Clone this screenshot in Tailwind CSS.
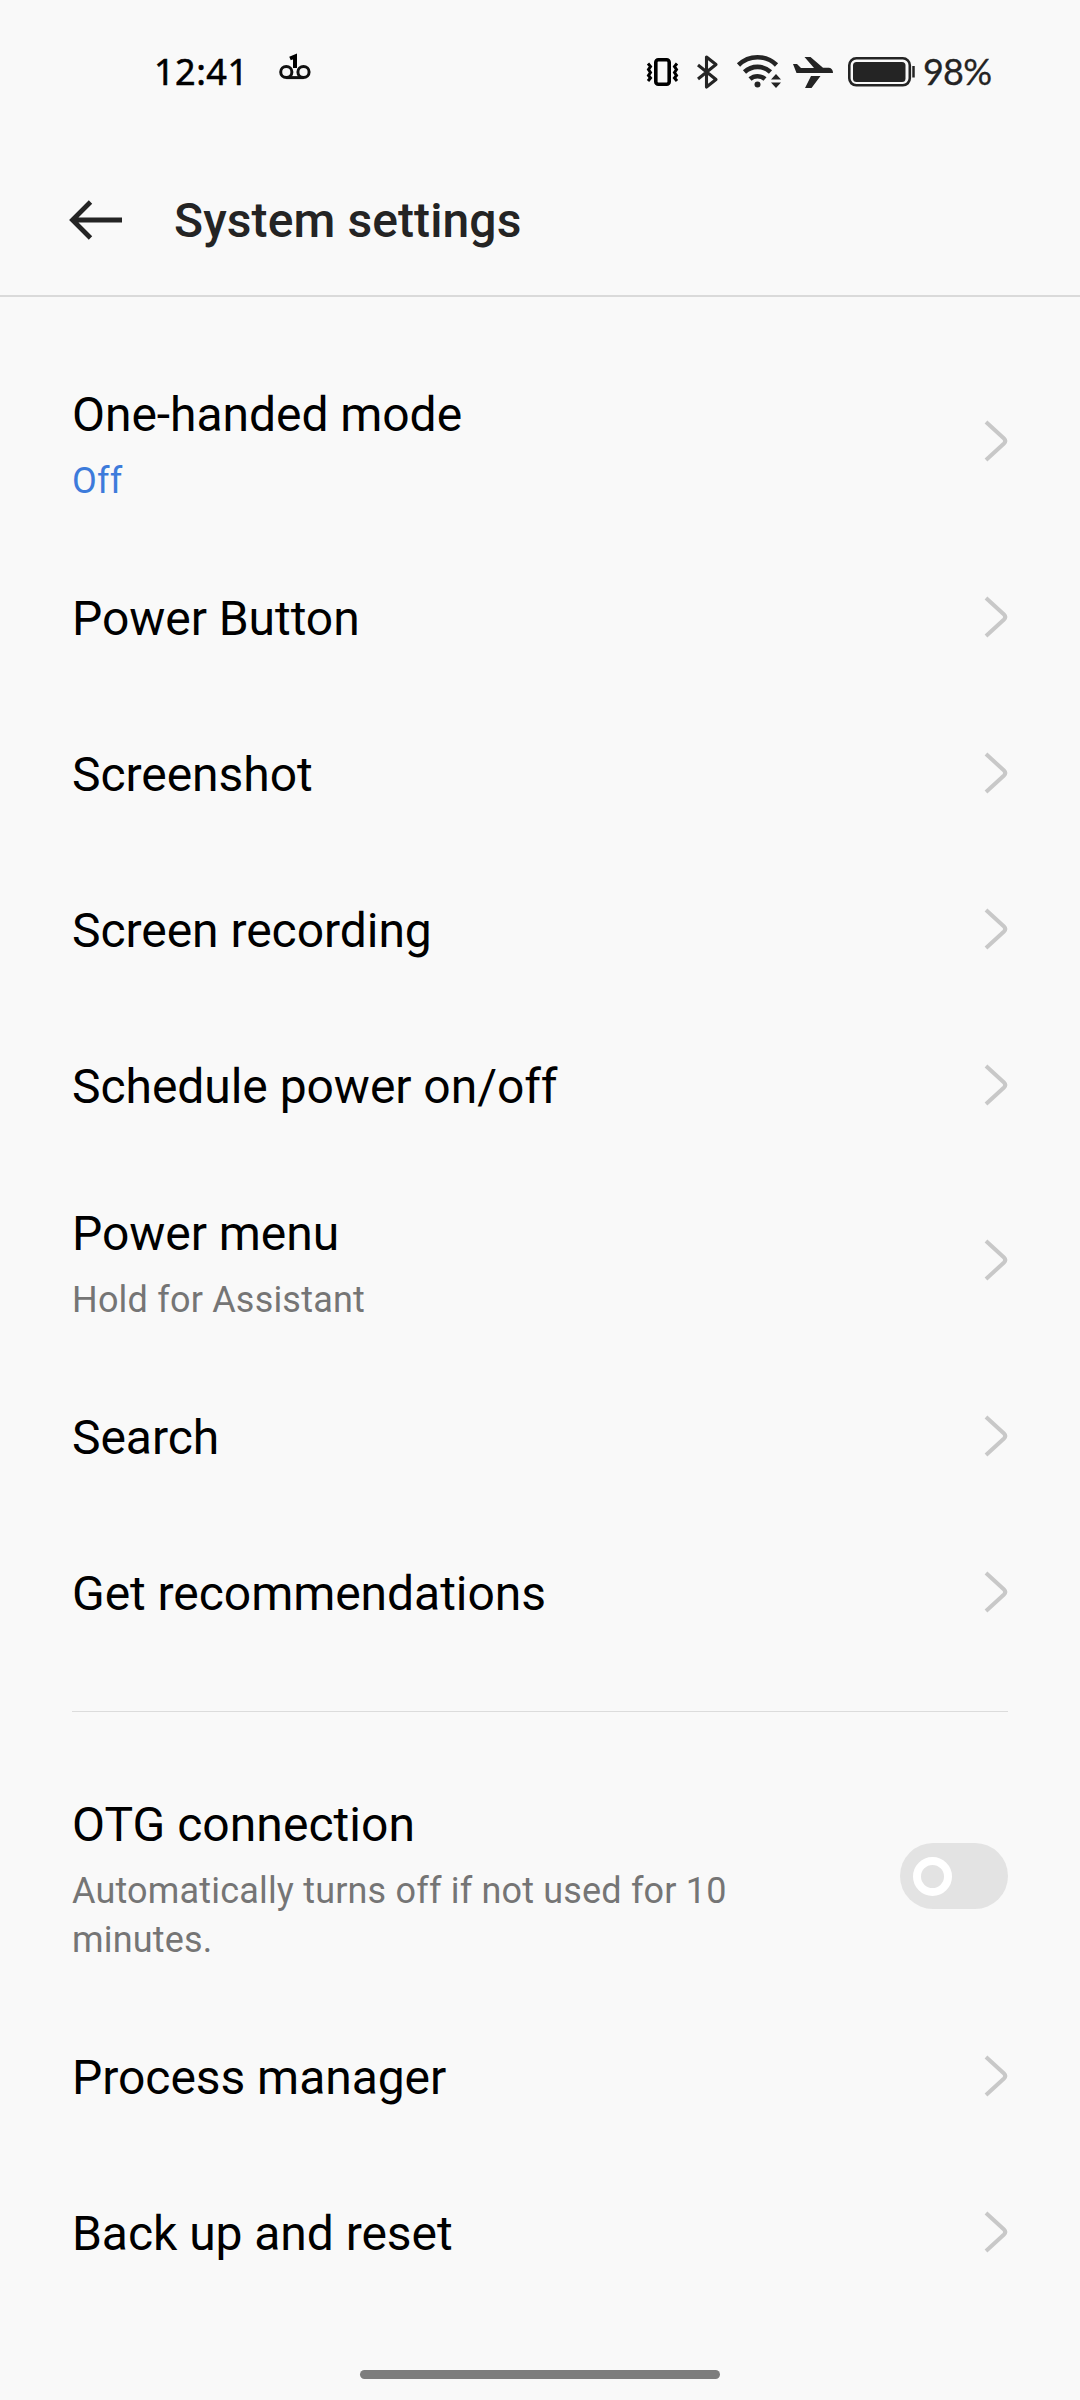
<!DOCTYPE html>
<html lang="en">
<head>
  <meta charset="UTF-8">
  <meta name="viewport" content="width=device-width, initial-scale=1.0">
  <title>System settings</title>
  <script src="https://cdn.jsdelivr.net/npm/@tailwindcss/browser@4"></script>
</head>
<body class="bg-[#f9f9f9] font-['Roboto',sans-serif] text-black">
  <div class="w-[1080px] h-[2400px] flex flex-col overflow-hidden">

    <!-- Status bar -->
    <div class="h-[144px] flex items-center justify-between pl-[154px] pr-[88px] text-[36px] leading-none">
      <div class="flex items-center">
        <span class="w-[125px] font-['Noto_Sans',sans-serif] tracking-[0.5px] [-webkit-text-stroke:0.6px_black]">12:41</span>
        <!-- Voicemail -->
        <svg class="w-8 h-11" viewBox="279 50 32 44" fill="none" stroke="#111" stroke-width="3">
          <circle cx="286.3" cy="72" r="5.6" />
          <circle cx="303.5" cy="72" r="5.6" />
          <path d="M286.3 77.6H303.5" />
          <path d="M290 58.5L295 56.5V68" stroke="#000" stroke-width="4" />
        </svg>
      </div>

      <div class="flex items-center text-[#242424]">
        <!-- Vibrate -->
        <svg class="w-[50px] h-11" viewBox="645 50 50 44" fill="none" stroke="#000">
          <rect x="655.8" y="59.8" width="13.400" height="24.400" rx="2.5" stroke-width="3.6" />
          <path d="M648 63.500L650.500 66.500L648.500 69.500L650.500 72.500L648.500 75.500L650.500 78L648 81M677 63.500L674.500 66.500L676.500 69.500L674.500 72.500L676.500 75.500L674.500 78L677 81" stroke-width="3" />
        </svg>
        <!-- Bluetooth -->
        <svg class="w-10 h-11" viewBox="695 50 40 44" fill="none" stroke="currentColor" stroke-width="3.1" stroke-linejoin="round">
          <path d="M698 65L716 79.500L706.500 87V57L716 64.500L698 79" />
        </svg>
        <!-- Wifi -->
        <svg class="w-[56px] h-11" viewBox="735 50 56 44" fill="none" stroke="currentColor" stroke-width="4.600">
          <path d="M738.500 65A27 27 0 0 1 776.500 65" />
          <path d="M744.500 72A19 19 0 0 1 770.500 72" />
          <path d="M750 79A11.500 11.500 0 0 1 765 79" />
          <circle cx="757.500" cy="84.500" r="3" fill="currentColor" stroke="none" />
          <path d="M771 79.500L776 74L781 79.500ZM771 82.500L776 88L781 82.500Z" fill="currentColor" stroke="none" />
        </svg>
        <!-- Airplane -->
        <svg class="w-[55px] h-11" viewBox="791 50 55 44" fill="currentColor">
          <path d="M793 64H797L801 68H814L804.500 57H810.500L823 67.800H829Q833 68.500 833 73H796.500ZM811 76H820.500L811.500 88H805Z" />
        </svg>
        <!-- Battery -->
        <svg class="w-[77px] h-11" viewBox="846 50 77 44" fill="none" stroke="currentColor">
          <rect x="849.300" y="58.300" width="60.500" height="27" rx="7" stroke-width="2.600" />
          <rect x="853" y="62" width="52.500" height="20" rx="3.500" fill="currentColor" stroke="none" />
          <path d="M913.500 66V77.500" stroke-width="2.500" />
        </svg>
        <span class="w-[69px] pb-0.5 font-['Lato',sans-serif] tracking-[-0.8px] [-webkit-text-stroke:0.3px_#242424]">98%</span>
      </div>
    </div>

    <!-- Header -->
    <header class="h-[153px] flex items-center border-b-2 border-[#dadada] pl-[68px]">
      <svg class="w-14 h-12" viewBox="68 196 56 48" fill="none" stroke="#242424" stroke-width="4.800">
        <path d="M122 220H73M90.500 202L72.500 220L90.500 238" />
      </svg>
      <h1 class="ml-[50px] pt-0.5 text-[48px] leading-[56px] font-medium tracking-[0.1px] text-[#242424]">System settings</h1>
    </header>

    <main class="pt-[46px] px-[72px] text-[48px] leading-[56px] tracking-[-0.05px]">
      <div class="h-[196px] flex items-center justify-between">
        <div class="h-full pt-11">
          <h2>One-handed mode</h2>
          <p class="mt-3.5 text-[36px] leading-[49px] tracking-[0.2px] text-[#3d7bdb]">Off</p>
        </div>
        <svg class="w-6 h-11" viewBox="0 0 24 44" fill="none" stroke="#c8c8c8" stroke-width="4"><path d="M2 3L20 19.500Q22.500 22 20 24.500L2 41" /></svg>
      </div>
      <div class="h-[156px] flex items-center justify-between">
        <h2 class="pt-1">Power Button</h2>
        <svg class="w-6 h-11" viewBox="0 0 24 44" fill="none" stroke="#c8c8c8" stroke-width="4"><path d="M2 3L20 19.500Q22.500 22 20 24.500L2 41" /></svg>
      </div>
      <div class="h-[156px] flex items-center justify-between">
        <h2 class="pt-1">Screenshot</h2>
        <svg class="w-6 h-11" viewBox="0 0 24 44" fill="none" stroke="#c8c8c8" stroke-width="4"><path d="M2 3L20 19.500Q22.500 22 20 24.500L2 41" /></svg>
      </div>
      <div class="h-[156px] flex items-center justify-between">
        <h2 class="pt-1">Screen recording</h2>
        <svg class="w-6 h-11" viewBox="0 0 24 44" fill="none" stroke="#c8c8c8" stroke-width="4"><path d="M2 3L20 19.500Q22.500 22 20 24.500L2 41" /></svg>
      </div>
      <div class="h-[156px] flex items-center justify-between">
        <h2 class="pt-1">Schedule power on/off</h2>
        <svg class="w-6 h-11" viewBox="0 0 24 44" fill="none" stroke="#c8c8c8" stroke-width="4"><path d="M2 3L20 19.500Q22.500 22 20 24.500L2 41" /></svg>
      </div>
      <div class="h-[195px] flex items-center justify-between">
        <div class="h-full pt-[43px]">
          <h2>Power menu</h2>
          <p class="mt-3.5 text-[36px] leading-[49px] tracking-[0.2px] text-[#757575]">Hold for Assistant</p>
        </div>
        <svg class="mb-px w-6 h-11" viewBox="0 0 24 44" fill="none" stroke="#c8c8c8" stroke-width="4"><path d="M2 3L20 19.500Q22.500 22 20 24.500L2 41" /></svg>
      </div>
      <div class="h-[156px] flex items-center justify-between">
        <h2 class="pt-1">Search</h2>
        <svg class="w-6 h-11" viewBox="0 0 24 44" fill="none" stroke="#c8c8c8" stroke-width="4"><path d="M2 3L20 19.500Q22.500 22 20 24.500L2 41" /></svg>
      </div>
      <div class="h-[156px] flex items-center justify-between">
        <h2 class="pt-1">Get recommendations</h2>
        <svg class="w-6 h-11" viewBox="0 0 24 44" fill="none" stroke="#c8c8c8" stroke-width="4"><path d="M2 3L20 19.500Q22.500 22 20 24.500L2 41" /></svg>
      </div>

      <hr class="mt-[41px] mb-10 border-t border-[#dcdcdc]">

      <div class="h-[246px] flex items-center justify-between">
        <div class="h-full w-[680px] pt-[45px]">
          <h2 class="tracking-[0.05px]">OTG connection</h2>
          <p class="mt-3.5 text-[36px] leading-[49px] tracking-[0.18px] text-[#757575]">Automatically turns off if not used for 10 minutes.</p>
        </div>
        <!-- Toggle, off -->
        <div class="mt-0.5 w-[108px] h-[66px] flex items-center rounded-full bg-[#e3e3e3] pl-[13px]">
          <div class="size-[39px] rounded-full border-8 border-white"></div>
        </div>
      </div>
      <div class="h-[156px] flex items-center justify-between">
        <h2 class="pt-1">Process manager</h2>
        <svg class="w-6 h-11" viewBox="0 0 24 44" fill="none" stroke="#c8c8c8" stroke-width="4"><path d="M2 3L20 19.500Q22.500 22 20 24.500L2 41" /></svg>
      </div>
      <div class="h-[156px] flex items-center justify-between">
        <h2 class="pt-1">Back up and reset</h2>
        <svg class="w-6 h-11" viewBox="0 0 24 44" fill="none" stroke="#c8c8c8" stroke-width="4"><path d="M2 3L20 19.500Q22.500 22 20 24.500L2 41" /></svg>
      </div>
    </main>

    <!-- Home indicator -->
    <div class="mt-auto mb-[21px] mx-auto w-[360px] h-[9px] rounded-full bg-[#7d7d7d]"></div>
  </div>
</body>
</html>
